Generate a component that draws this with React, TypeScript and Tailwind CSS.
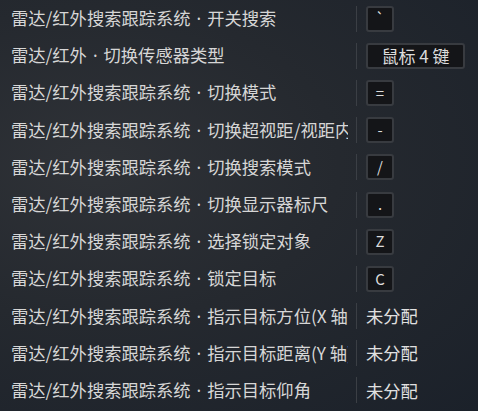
import React from 'react';

type Row = { pre: string; post: string; key?: string; wide?: boolean };

const rows: Row[] = [
  { pre: '雷达/红外搜索跟踪系统', post: '开关搜索', key: '`' },
  { pre: '雷达/红外', post: '切换传感器类型', key: '鼠标 4 键', wide: true },
  { pre: '雷达/红外搜索跟踪系统', post: '切换模式', key: '=' },
  { pre: '雷达/红外搜索跟踪系统', post: '切换超视距/视距内', key: '-' },
  { pre: '雷达/红外搜索跟踪系统', post: '切换搜索模式', key: '/' },
  { pre: '雷达/红外搜索跟踪系统', post: '切换显示器标尺', key: '.' },
  { pre: '雷达/红外搜索跟踪系统', post: '选择锁定对象', key: 'Z' },
  { pre: '雷达/红外搜索跟踪系统', post: '锁定目标', key: 'C' },
  { pre: '雷达/红外搜索跟踪系统', post: '指示目标方位(X 轴)' },
  { pre: '雷达/红外搜索跟踪系统', post: '指示目标距离(Y 轴)' },
  { pre: '雷达/红外搜索跟踪系统', post: '指示目标仰角' },
];

export default function App() {
  return (
    <div
      className="w-[478px] h-[411px] overflow-hidden bg-[radial-gradient(ellipse_at_20%_40%,#2f3237_0%,#25292f_45%,#1b212a_100%)] text-[#d6d6d6] text-[17.3px]"
      style={{ fontFamily: '"Noto Sans CJK SC", "Noto Sans", sans-serif' }}
    >
      <div className="flex flex-col">
        {rows.map((row, i) => (
          <div key={i} className="flex items-center h-[37.2px]">
            <div className="w-[348px] pl-[11px] whitespace-nowrap overflow-hidden leading-[28px]">
              {row.pre}
              <span className="mx-[6px] font-['Noto_Sans']">·</span>
              {row.post}
            </div>
            <div className="ml-[8px] w-px h-[26px] bg-[#3b3f45]" />
            <div className="ml-[9px] flex items-center">
              {row.key ? (
                <div
                  className={
                    row.wide
                      ? 'h-[26px] w-[99px] flex items-center justify-center rounded-[3px] border-2 border-[#383b40] bg-[#141518] text-[17px] text-[#dcdcdc] whitespace-pre'
                      : 'h-[26px] w-[28px] flex items-center justify-center rounded-[3px] border-2 border-[#383b40] bg-[#141518] text-[15px] text-[#dcdcdc]'
                  }
                >
                  {row.wide ? '鼠标\u00a04\u00a0键' : row.key}
                </div>
              ) : (
                <span className="text-[#e0e0e0] text-[17.3px]">未分配</span>
              )}
            </div>
          </div>
        ))}
      </div>
    </div>
  );
}
